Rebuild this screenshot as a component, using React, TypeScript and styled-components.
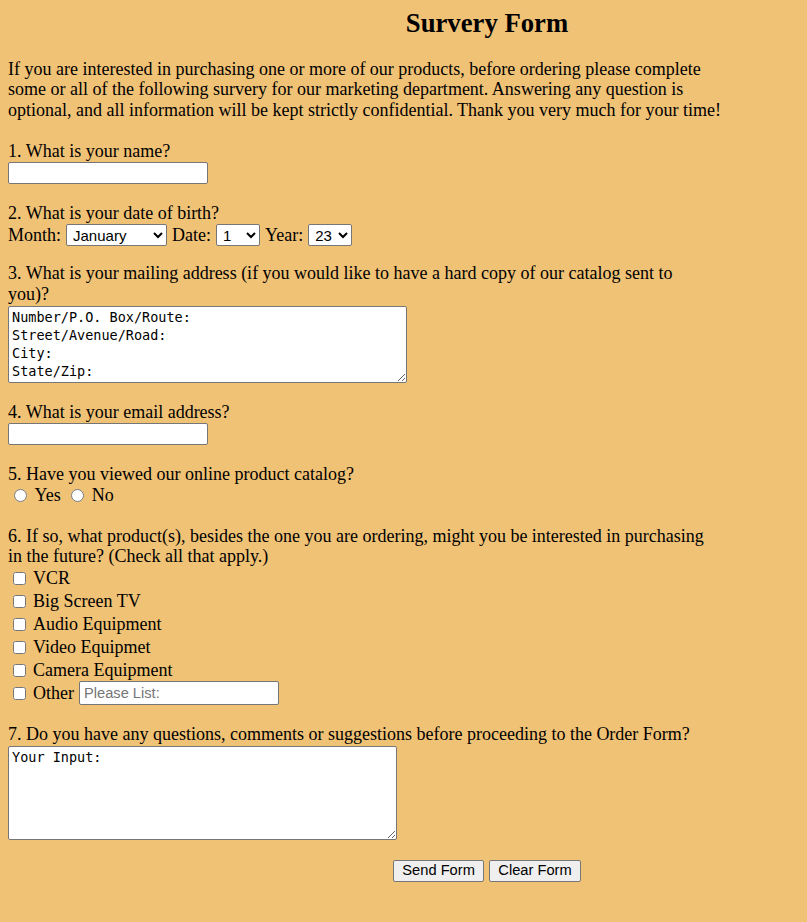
import React from "react";
import styled, { createGlobalStyle } from "styled-components";

const GlobalStyle = createGlobalStyle`
  html, body {
    margin: 0;
    padding: 0;
    background: #f0c276;
  }
  body {
    font-family: "Liberation Serif", "Times New Roman", serif;
    font-size: 18px;
    line-height: 20.5px;
    color: #000;
  }
`;

const Page = styled.main`
  padding: 8px 8px 40px 8px;
`;

const Title = styled.h2`
  margin: 0;
  padding-left: 167px;
  text-align: center;
  font-size: 26.7px;
  line-height: 30.3px;
  font-weight: bold;
`;

const Intro = styled.p`
  margin: 20.5px 0 0 0;
  width: 714px;
`;

const Question = styled.section<{ $gap?: number }>`
  margin-top: ${(p) => (p.$gap ?? 20.5)}px;
  width: 714px;
`;

const Prompt = styled.div`
  line-height: 20.5px;
`;

const TextInput = styled.input<{ $w?: number; $h?: number }>`
  box-sizing: border-box;
  width: ${(p) => p.$w ?? 200}px;
  height: ${(p) => p.$h ?? 22}px;
  margin: 0;
  padding: 0 3px 0 4px;
  border: 1px solid #767676;
  border-radius: 2px;
  background: #fff;
  font-family: "Liberation Sans", Arial, sans-serif;
  font-size: 14.67px;
  color: #000;
  &::placeholder {
    color: #757575;
  }
`;

const BlockInput = styled(TextInput)`
  display: block;
  margin-top: 1px;
`;

const SelectRow = styled.div`
  display: flex;
  align-items: center;
  gap: 5px;
  height: 22px;
  margin-top: 0.5px;
`;

const Select = styled.select<{ $w: number }>`
  box-sizing: border-box;
  width: ${(p) => p.$w}px;
  height: 21.5px;
  margin: 0;
  padding: 0 0 0 2px;
  border: 1px solid #767676;
  border-radius: 2px;
  background: #fff;
  font-family: "Liberation Sans", Arial, sans-serif;
  font-size: 15px;
  color: #000;
`;

const TextArea = styled.textarea<{ $w: number; $h: number }>`
  display: block;
  box-sizing: border-box;
  width: ${(p) => p.$w}px;
  height: ${(p) => p.$h}px;
  margin: 2px 0 0 0;
  padding: 2px 3px;
  border: 1px solid #767676;
  border-radius: 2px;
  background: #fff;
  font-family: "DejaVu Sans Mono", "Liberation Mono", monospace;
  font-size: 13.5px;
  line-height: 17.7px;
  color: #000;
`;

const RadioRow = styled.div`
  display: flex;
  align-items: center;
  height: 22px;
`;

const OptionRow = styled.label`
  display: flex;
  align-items: center;
  height: 23px;
`;

const Radio = styled.input.attrs({ type: "radio" })`
  width: 13px;
  height: 13px;
  margin: 1px 8px 0 5.5px;
`;

const RadioText = styled.span`
  margin-right: 4.5px;
`;

const Check = styled.input.attrs({ type: "checkbox" })`
  width: 13px;
  height: 13px;
  margin: 0 7.5px 0 4.5px;
`;

const OtherText = styled.span`
  margin-right: 5px;
`;

const Buttons = styled.div`
  display: flex;
  justify-content: center;
  gap: 5.5px;
  padding-left: 167px;
  margin-top: 19.7px;
`;

const Button = styled.button`
  box-sizing: border-box;
  height: 21.6px;
  margin: 0;
  padding: 0 8px;
  border: 1px solid #767676;
  border-radius: 2px;
  background: #efefef;
  font-family: "Liberation Sans", Arial, sans-serif;
  font-size: 14.67px;
  color: #000;
  line-height: 19px;
`;

const months = [
  "January", "February", "March", "April", "May", "June", "July",
  "August", "September", "October", "November", "December",
];
const days = Array.from({ length: 31 }, (_, i) => String(i + 1));
const years = Array.from({ length: 100 }, (_, i) => String(i).padStart(2, "0"));

const products = ["VCR", "Big Screen TV", "Audio Equipment", "Video Equipmet", "Camera Equipment"];

export default function App() {
  return (
    <>
      <GlobalStyle />
      <Page>
        <Title>Survery Form</Title>
        <Intro>
          If you are interested in purchasing one or more of our products, before ordering please
          complete some or all of the following survery for our marketing department. Answering any
          question is optional, and all information will be kept strictly confidential. Thank you
          very much for your time!
        </Intro>
        <form onSubmit={(e) => e.preventDefault()}>
          <Question>
            <Prompt>1. What is your name?</Prompt>
            <BlockInput type="text" name="name" />
          </Question>

          <Question $gap={18.8}>
            <Prompt>2. What is your date of birth?</Prompt>
            <SelectRow>
              <span>Month:</span>
              <Select $w={101} defaultValue="January">
                {months.map((m) => (
                  <option key={m}>{m}</option>
                ))}
              </Select>
              <span>Date:</span>
              <Select $w={44} defaultValue="1">
                {days.map((d) => (
                  <option key={d}>{d}</option>
                ))}
              </Select>
              <span>Year:</span>
              <Select $w={44} defaultValue="23">
                {years.map((y) => (
                  <option key={y}>{y}</option>
                ))}
              </Select>
            </SelectRow>
          </Question>

          <Question $gap={17.3}>
            <Prompt>
              3. What is your mailing address (if you would like to have a hard copy of our catalog
              sent to
              <br />
              you)?
            </Prompt>
            <TextArea
              $w={399}
              $h={77}
              defaultValue={"Number/P.O. Box/Route:\nStreet/Avenue/Road:\nCity:\nState/Zip:"}
            />
          </Question>

          <Question $gap={18.2}>
            <Prompt>4. What is your email address?</Prompt>
            <BlockInput type="text" name="email" />
          </Question>

          <Question $gap={18.5}>
            <Prompt>5. Have you viewed our online product catalog?</Prompt>
            <RadioRow>
              <Radio name="viewed" value="yes" />
              <RadioText>Yes</RadioText>
              <Radio name="viewed" value="no" />
              <RadioText>No</RadioText>
            </RadioRow>
          </Question>

          <Question $gap={19.5}>
            <Prompt>
              6. If so, what product(s), besides the one you are ordering, might you be interested
              in purchasing in the future? (Check all that apply.)
            </Prompt>
            {products.map((p) => (
              <OptionRow key={p}>
                <Check name="products" value={p} />
                <span>{p}</span>
              </OptionRow>
            ))}
            <OptionRow>
              <Check name="products" value="Other" />
              <OtherText>Other</OtherText>
              <TextInput type="text" placeholder="Please List:" $h={23.3} />
            </OptionRow>
          </Question>

          <Question $gap={19}>
            <Prompt>
              7. Do you have any questions, comments or suggestions before proceeding to the Order
              Form?
            </Prompt>
            <TextArea $w={389} $h={94.3} defaultValue="Your Input:" />
          </Question>

          <Buttons>
            <Button type="submit">Send Form</Button>
            <Button type="reset">Clear Form</Button>
          </Buttons>
        </form>
      </Page>
    </>
  );
}
